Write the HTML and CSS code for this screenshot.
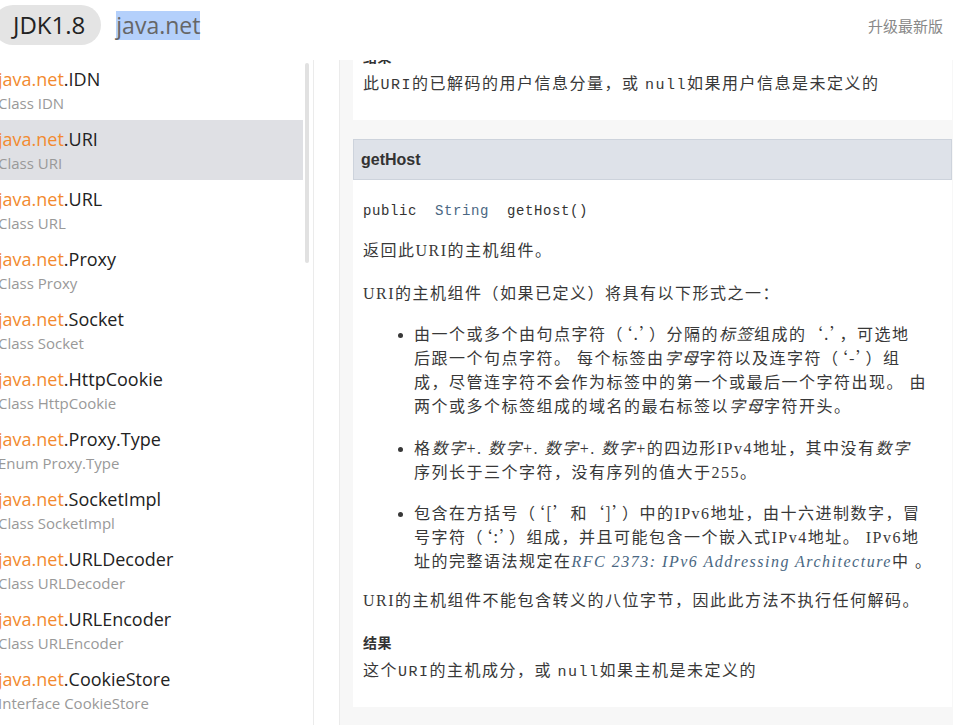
FILE: index.html
```html
<!DOCTYPE html>
<html lang="zh-CN">
<head>
<meta charset="utf-8">
<title>java.net.URI - JDK1.8</title>
<link rel="stylesheet" href="styles.css">
</head>
<body>
<div class="page">
  <header class="topbar">
    <span class="pill">JDK1.8</span>
    <span class="crumb">java.net</span>
    <a class="upgrade">升级最新版</a>
  </header>
  <div class="main">
    <aside class="sidebar">
      <ul class="class-list">
        <li class="item"><div class="title"><span class="pkg">java.net</span>.IDN</div><div class="kind">Class IDN</div></li>
        <li class="item active"><div class="title"><span class="pkg">java.net</span>.URI</div><div class="kind">Class URI</div></li>
        <li class="item"><div class="title"><span class="pkg">java.net</span>.URL</div><div class="kind">Class URL</div></li>
        <li class="item"><div class="title"><span class="pkg">java.net</span>.Proxy</div><div class="kind">Class Proxy</div></li>
        <li class="item"><div class="title"><span class="pkg">java.net</span>.Socket</div><div class="kind">Class Socket</div></li>
        <li class="item"><div class="title"><span class="pkg">java.net</span>.HttpCookie</div><div class="kind">Class HttpCookie</div></li>
        <li class="item"><div class="title"><span class="pkg">java.net</span>.Proxy.Type</div><div class="kind">Enum Proxy.Type</div></li>
        <li class="item"><div class="title"><span class="pkg">java.net</span>.SocketImpl</div><div class="kind">Class SocketImpl</div></li>
        <li class="item"><div class="title"><span class="pkg">java.net</span>.URLDecoder</div><div class="kind">Class URLDecoder</div></li>
        <li class="item"><div class="title"><span class="pkg">java.net</span>.URLEncoder</div><div class="kind">Class URLEncoder</div></li>
        <li class="item"><div class="title"><span class="pkg">java.net</span>.CookieStore</div><div class="kind">Interface CookieStore</div></li>
        <li class="item"><div class="title"><span class="pkg">java.net</span>.CookieHandler</div><div class="kind">Class CookieHandler</div></li>
      </ul>
      <div class="track"><div class="thumb"></div></div>
    </aside>
    <div class="spacer"></div>
    <main class="content">
      <section class="card card-tail">
        <div class="label">结果</div>
        <p class="last">此<code>URI</code>的已解码的用户信息分量，或 <code>null</code>如果用户信息是未定义的</p>
      </section>
      <section class="method">
        <h3 class="method-name">getHost</h3>
        <div class="card method-body">
          <pre class="sig">public  <a class="type">String</a>  getHost()</pre>
          <p>返回此URI的主机组件。</p>
          <p class="intro">URI的主机组件（如果已定义）将具有以下形式之一：</p>
          <ul class="forms">
            <li>由一个或多个由句点字符（<span class="q">‘.’</span>）分隔的<i>标签</i>组成的<span class="q">‘.’</span>，可选地<br>后跟一个句点字符。 每个标签由<i>字母</i>字符以及连字符（<span class="q">‘-’</span>）组<br>成，尽管连字符不会作为标签中的第一个或最后一个字符出现。 由<br>两个或多个标签组成的域名的最右标签以<i>字母</i>字符开头。</li>
            <li>格<i>数字</i>+. <i>数字</i>+. <i>数字</i>+. <i>数字</i>+的四边形IPv4地址，其中没有<i>数字</i><br>序列长于三个字符，没有序列的值大于255。</li>
            <li>包含在方括号（<span class="q">‘[’</span>和<span class="q">‘]’</span>）中的IPv6地址，由十六进制数字，冒<br>号字符（<span class="q">‘:’</span>）组成，并且可能包含一个嵌入式IPv4地址。 IPv6地<br>址的完整语法规定在<a class="link"><i>RFC&nbsp;2373: IPv6 Addressing Architecture</i></a>中 。</li>
          </ul>
          <p class="after-list">URI的主机组件不能包含转义的八位字节，因此此方法不执行任何解码。</p>
          <div class="label label-result">结果</div>
          <p class="last">这个<code>URI</code>的主机成分，或 <code>null</code>如果主机是未定义的</p>
        </div>
      </section>
    </main>
  </div>
</div>
</body>
</html>
```

FILE: styles.css
```css
html, body {
  margin: 0;
  padding: 0;
  background: #fff;
  overflow: hidden;
}

body {
  font-family: "Open Sans", "Noto Sans CJK SC", sans-serif;
  color: #333;
}

.page {
  width: 960px;
  height: 725px;
  margin-left: -7px;
  display: flex;
  flex-direction: column;
}

/* ---------- top bar ---------- */
.topbar {
  height: 60px;
  flex: none;
  box-sizing: border-box;
  padding: 5px 10px 15px 0;
  display: flex;
  align-items: center;
}

.pill {
  height: 40px;
  line-height: 40px;
  padding: 0 16px 0 20px;
  border-radius: 20px;
  background: #e4e4e4;
  color: #222;
  font-size: 24px;
}

.crumb {
  margin-left: 15px;
  font-size: 23px;
  line-height: 29px;
  color: #666;
  background: #b4d0fb;
}

.upgrade {
  margin-left: auto;
  font-family: "Noto Sans CJK SC", sans-serif;
  font-size: 15px;
  color: #888;
}

/* ---------- layout ---------- */
.main {
  flex: 1;
  min-height: 0;
  display: flex;
}

.sidebar {
  width: 321px;
  flex: none;
  box-sizing: border-box;
  border-right: 1px solid #ebebeb;
  display: flex;
  overflow: hidden;
}

.class-list {
  list-style: none;
  margin: 0;
  padding: 0;
  width: 310px;
  flex: none;
}

.item {
  height: 60px;
  box-sizing: border-box;
  padding: 7px 0 0 5px;
  white-space: nowrap;
}

.item.active {
  background: #dfe0e4;
}

.title {
  font-size: 18px;
  line-height: 24px;
  color: #222;
}

.pkg {
  color: #f28a30;
}

.kind {
  font-size: 15px;
  line-height: 24px;
  color: #999;
}

.track {
  width: 10px;
  flex: none;
}

.thumb {
  margin: 3px 0 0 2px;
  width: 4px;
  height: 200px;
  border-radius: 2px;
  background: #e1e1e1;
}

.spacer {
  width: 25px;
  flex: none;
}

.content {
  flex: 1;
  min-width: 0;
  border-left: 1px solid #ebebeb;
  background: #f7f7f7;
  padding: 0 1px 0 13px;
  overflow: hidden;
}

/* ---------- cards ---------- */
.card {
  background: #fff;
  font-family: "Liberation Serif", "Noto Sans CJK SC", serif;
  font-size: 16px;
  letter-spacing: 1.5px;
  color: #383838;
}

.card p {
  margin: 0 0 19px;
  line-height: 24px;
}

.card p.intro {
  margin-bottom: 17px;
}

.card-tail {
  margin-top: -14px;
  padding: 0 10px 24px;
}

.label {
  font-family: "Noto Sans CJK SC", sans-serif;
  font-weight: bold;
  font-size: 14px;
  line-height: 20px;
  letter-spacing: 0.5px;
  color: #333;
  margin-bottom: 6px;
}

.label-result {
  margin-bottom: 7px;
}

.card p.last {
  margin: 0;
}

code {
  font-family: "Liberation Mono", monospace;
  font-size: 15px;
  letter-spacing: 1.5px;
  line-height: 1;
}

.q {
  font-family: "Noto Sans CJK SC", sans-serif;
  line-height: 1;
}

.method {
  margin-top: 19px;
}

.method-name {
  margin: 0;
  height: 41px;
  box-sizing: border-box;
  border: 1px solid #cdd3dc;
  background: #dee2e9;
  padding-left: 7px;
  font-family: "Liberation Sans", Arial, sans-serif;
  font-size: 16px;
  font-weight: bold;
  line-height: 39px;
  color: #333;
}

.method-body {
  padding: 19px 10px 24px;
}

.sig {
  margin: 0 0 16px;
  font-family: "Liberation Mono", monospace;
  font-size: 14px;
  letter-spacing: 0.6px;
  line-height: 24px;
  color: #333;
}

.type,
.link {
  color: #4a6782;
}

.forms {
  margin: 0 0 15px;
  padding-left: 51px;
  line-height: 24px;
}

.forms li {
  margin-bottom: 17.5px;
}

.forms li:last-child {
  margin-bottom: 0;
}
```
